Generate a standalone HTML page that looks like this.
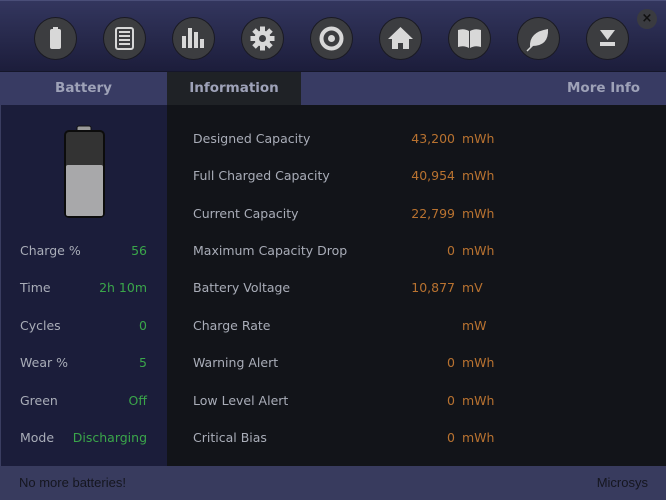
<!DOCTYPE html>
<html><head><meta charset="utf-8"><style>
*{margin:0;padding:0;box-sizing:border-box}
body{width:666px;height:500px;overflow:hidden;background:#121419;font-family:"DejaVu Sans","Liberation Sans",sans-serif;font-size:12.5px;color:#a9adb8;position:relative}
#hdr{position:absolute;left:0;top:0;width:666px;height:71px;background:linear-gradient(#33365e,#1c1d3b);border-top:1px solid #4a4e78}
.ic{position:absolute;top:17px;width:41px;height:41px;border-radius:50%;background:#3c3d40;box-shadow:0 0 0 1px #1a1a22}
.ic svg{position:absolute;left:0;top:0}
#close{position:absolute;left:637px;top:8px;width:20px;height:20px;border-radius:50%;background:#3a3b40;color:#111;font-weight:bold;font-size:13px;text-align:center;line-height:19px}
#tabs{position:absolute;left:0;top:71px;width:666px;height:34px;background:#383b63;border-top:1px solid #15162a}
.tab{position:absolute;top:0;height:33px;line-height:33px;font-weight:bold;font-size:13.5px;color:#9ea2b8;text-align:center}
#left{position:absolute;left:0;top:105px;width:167px;height:361px;background:#1b1d3a;border-left:1px solid #3a3d60}
.row{position:absolute;white-space:nowrap;margin-top:1px}
.g{color:#3aa64a}
.o{color:#b87230}
#foot{position:absolute;left:0;top:466px;width:666px;height:34px;background:#383b5e;color:#15161f;font-family:"Liberation Sans",sans-serif;font-size:13px;line-height:34px}
</style></head><body>
<div id="hdr">
<div class="ic" style="left:35px"><svg width="41" height="41"><rect x="15" y="11" width="11" height="20" rx="2" fill="#d8d8d8"/><rect x="18" y="9" width="5" height="3" fill="#d8d8d8"/></svg></div>
<div class="ic" style="left:104px"><svg width="41" height="41"><rect x="12" y="10" width="17" height="21" rx="2" fill="none" stroke="#d8d8d8" stroke-width="2"/><g fill="#d8d8d8"><rect x="15" y="13" width="11" height="2"/><rect x="15" y="17" width="11" height="2"/><rect x="15" y="21" width="11" height="2"/><rect x="15" y="25" width="11" height="2"/></g></svg></div>
<div class="ic" style="left:173px"><svg width="41" height="41"><g fill="#d8d8d8"><rect x="9" y="18" width="4" height="12"/><rect x="15" y="10" width="4" height="20"/><rect x="21" y="14" width="4" height="16"/><rect x="27" y="21" width="4" height="9"/></g></svg></div>
<div class="ic" style="left:242px"><svg width="41" height="41"><g transform="translate(20.5 20.5)" fill="#d8d8d8"><circle r="8"/><g id="t"><rect x="-2.5" y="-12" width="5" height="24"/></g><use href="#t" transform="rotate(45)"/><use href="#t" transform="rotate(90)"/><use href="#t" transform="rotate(135)"/></g><circle cx="20.5" cy="20.5" r="3.5" fill="#3c3d40"/></svg></div>
<div class="ic" style="left:311px"><svg width="41" height="41"><circle cx="20.5" cy="20.5" r="10" fill="none" stroke="#d8d8d8" stroke-width="4"/><circle cx="20.5" cy="20.5" r="3.5" fill="#d8d8d8"/></svg></div>
<div class="ic" style="left:380px"><svg width="41" height="41"><path d="M20.5 9 L33 21 L29 21 L29 31 L23 31 L23 25 L18 25 L18 31 L12 31 L12 21 L8 21 Z" fill="#d8d8d8"/></svg></div>
<div class="ic" style="left:449px"><svg width="41" height="41"><path d="M9 12 Q15 10 20 13 L20 30 Q15 27 9 29 Z M21 13 Q26 10 32 12 L32 29 Q26 27 21 30 Z" fill="#d8d8d8"/></svg></div>
<div class="ic" style="left:518px"><svg width="41" height="41"><path d="M12 29 Q11 14 30 11 Q31 28 14 28 Z" fill="#d8d8d8"/><path d="M9 33 L22 20" stroke="#d8d8d8" stroke-width="1.5"/></svg></div>
<div class="ic" style="left:587px"><svg width="41" height="41"><path d="M13 12 L28 12 L20.5 22 Z" fill="#d8d8d8"/><rect x="13" y="24" width="15" height="4" fill="#d8d8d8"/></svg></div>
<div id="close">×</div>
</div>
<div id="tabs">
<div class="tab" style="left:0;width:167px">Battery</div>
<div class="tab" style="left:167px;width:134px;background:#1f2226">Information</div>
<div class="tab" style="left:540px;width:126px;text-align:right;padding-right:26px">More Info</div>
</div>
<div id="left">
<svg style="position:absolute;left:62px;top:20px" width="44" height="94"><rect x="14" y="1" width="14" height="7" rx="2" fill="#9a9a9a" stroke="#111"/><rect x="2" y="6" width="39" height="86" rx="4" fill="#333" stroke="#0c0c0c" stroke-width="2"/><rect x="3" y="40" width="37" height="51" rx="2" fill="#a8a8aa"/></svg>
</div>
<div class="row" style="left:20px;top:242px">Charge %</div><div class="row g" style="right:519px;top:242px">56</div>
<div class="row" style="left:20px;top:279px">Time</div><div class="row g" style="right:519px;top:279px">2h 10m</div>
<div class="row" style="left:20px;top:317px">Cycles</div><div class="row g" style="right:519px;top:317px">0</div>
<div class="row" style="left:20px;top:354px">Wear %</div><div class="row g" style="right:519px;top:354px">5</div>
<div class="row" style="left:20px;top:392px">Green</div><div class="row g" style="right:519px;top:392px">Off</div>
<div class="row" style="left:20px;top:429px">Mode</div><div class="row g" style="right:519px;top:429px">Discharging</div>

<div class="row" style="left:193px;top:130px">Designed Capacity</div><div class="row o" style="right:211px;top:130px">43,200</div><div class="row o" style="left:462px;top:130px">mWh</div>
<div class="row" style="left:193px;top:167px">Full Charged Capacity</div><div class="row o" style="right:211px;top:167px">40,954</div><div class="row o" style="left:462px;top:167px">mWh</div>
<div class="row" style="left:193px;top:205px">Current Capacity</div><div class="row o" style="right:211px;top:205px">22,799</div><div class="row o" style="left:462px;top:205px">mWh</div>
<div class="row" style="left:193px;top:242px">Maximum Capacity Drop</div><div class="row o" style="right:211px;top:242px">0</div><div class="row o" style="left:462px;top:242px">mWh</div>
<div class="row" style="left:193px;top:279px">Battery Voltage</div><div class="row o" style="right:211px;top:279px">10,877</div><div class="row o" style="left:462px;top:279px">mV</div>
<div class="row" style="left:193px;top:317px">Charge Rate</div><div class="row o" style="left:462px;top:317px">mW</div>
<div class="row" style="left:193px;top:354px">Warning Alert</div><div class="row o" style="right:211px;top:354px">0</div><div class="row o" style="left:462px;top:354px">mWh</div>
<div class="row" style="left:193px;top:392px">Low Level Alert</div><div class="row o" style="right:211px;top:392px">0</div><div class="row o" style="left:462px;top:392px">mWh</div>
<div class="row" style="left:193px;top:429px">Critical Bias</div><div class="row o" style="right:211px;top:429px">0</div><div class="row o" style="left:462px;top:429px">mWh</div>

<div id="foot"><span style="position:absolute;left:19px">No more batteries!</span><span style="position:absolute;right:18px">Microsys</span></div>
</body></html>
